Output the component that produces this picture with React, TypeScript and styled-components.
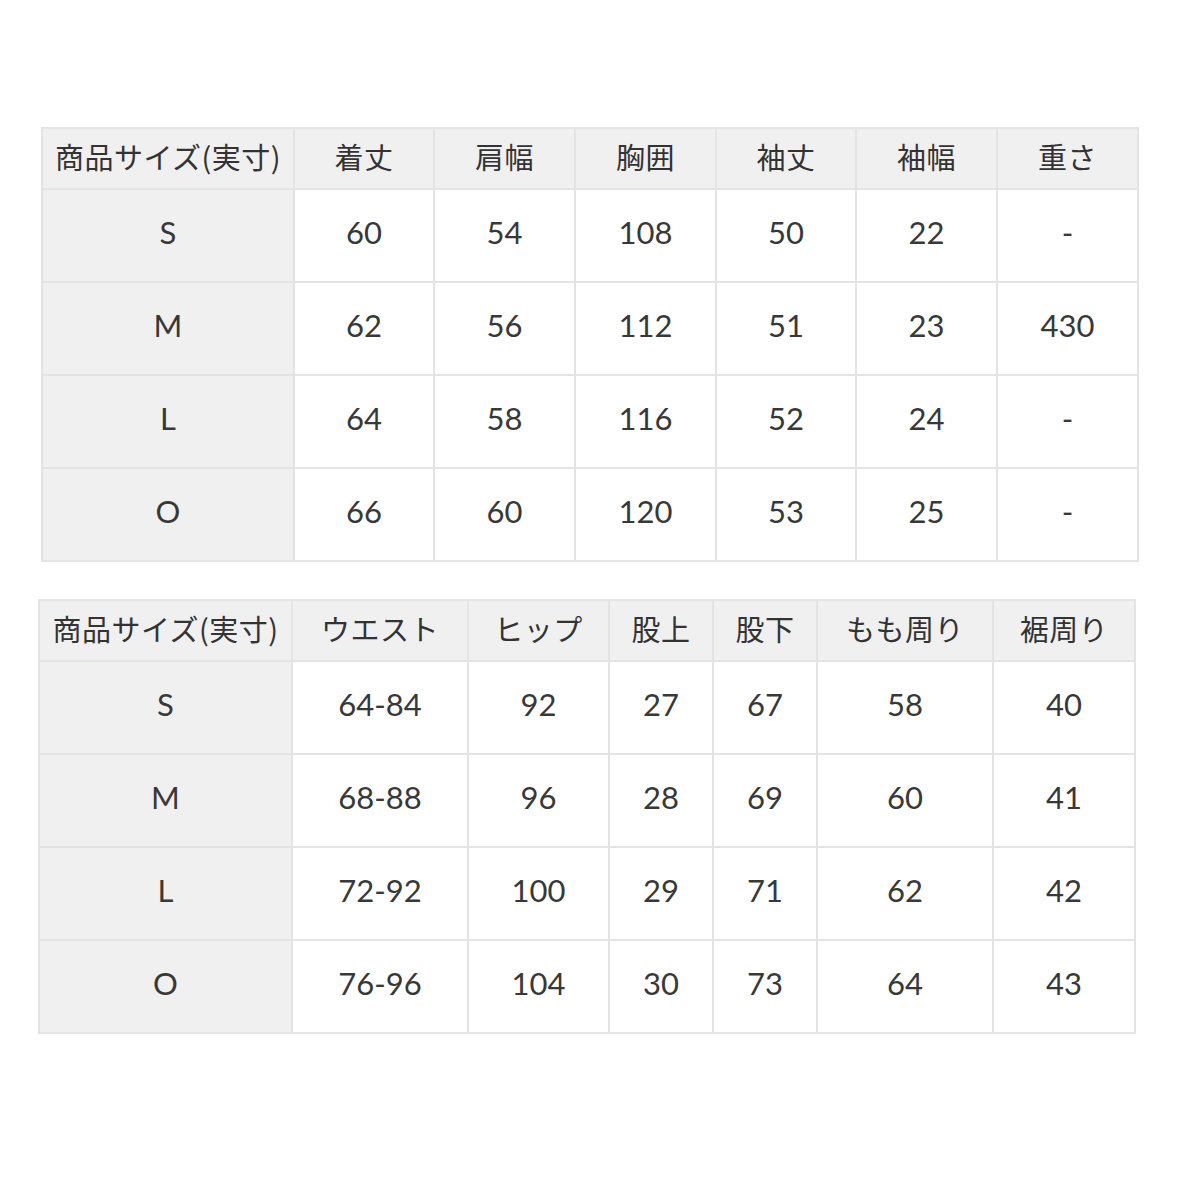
import React from 'react';
import styled, { createGlobalStyle } from 'styled-components';

const GlobalStyle = createGlobalStyle`
  body {
    margin: 0;
    background: #ffffff;
    font-family: Lato, "Noto Sans CJK JP", sans-serif;
    color: #333333;
  }
`;

const Page = styled.div`
  width: 1200px;
  height: 1200px;
  padding-top: 127px;
  box-sizing: border-box;
  display: flex;
  flex-direction: column;
  gap: 37px;
`;

const Table = styled.table<{ left: number }>`
  margin-left: ${p => p.left}px;
  width: 1096px;
  border-collapse: collapse;
  table-layout: fixed;
  border: 2px solid #e4e4e4;
`;

const HeadCell = styled.th`
  height: 61px;
  padding: 0 0 5px;
  box-sizing: border-box;
  background: #f0f0f0;
  border: 2px solid #e4e4e4;
  font-family: "Noto Sans CJK JP", sans-serif;
  font-weight: 400;
  font-size: 29px;
  letter-spacing: 0.5px;
  color: #333333;
  text-align: center;
  vertical-align: middle;
  white-space: nowrap;
`;

const SizeCell = styled.td`
  height: 93px;
  padding: 0 0 7px;
  box-sizing: border-box;
  background: #f0f0f0;
  border: 2px solid #e4e4e4;
  font-size: 31px;
  color: #383838;
  text-align: center;
  vertical-align: middle;
`;

const ValueCell = styled.td`
  height: 93px;
  padding: 0 0 7px;
  box-sizing: border-box;
  background: #ffffff;
  border: 2px solid #e4e4e4;
  font-size: 31px;
  color: #383838;
  text-align: center;
  vertical-align: middle;
`;

type Chart = {
  left: number;
  widths: number[];
  heads: string[];
  rows: string[][];
};

const charts: Chart[] = [
  {
    left: 41,
    widths: [252, 140, 141, 141, 140, 141, 141],
    heads: ['商品サイズ(実寸)', '着丈', '肩幅', '胸囲', '袖丈', '袖幅', '重さ'],
    rows: [
      ['S', '60', '54', '108', '50', '22', '-'],
      ['M', '62', '56', '112', '51', '23', '430'],
      ['L', '64', '58', '116', '52', '24', '-'],
      ['O', '66', '60', '120', '53', '25', '-'],
    ],
  },
  {
    left: 38,
    widths: [253, 176, 141, 104, 104, 176, 142],
    heads: ['商品サイズ(実寸)', 'ウエスト', 'ヒップ', '股上', '股下', 'もも周り', '裾周り'],
    rows: [
      ['S', '64-84', '92', '27', '67', '58', '40'],
      ['M', '68-88', '96', '28', '69', '60', '41'],
      ['L', '72-92', '100', '29', '71', '62', '42'],
      ['O', '76-96', '104', '30', '73', '64', '43'],
    ],
  },
];

const SizeTable: React.FC<{ chart: Chart }> = ({ chart }) => (
  <Table left={chart.left}>
    <colgroup>
      {chart.widths.map((w, i) => (
        <col key={i} style={{ width: w }} />
      ))}
    </colgroup>
    <thead>
      <tr>
        {chart.heads.map(h => (
          <HeadCell key={h}>{h}</HeadCell>
        ))}
      </tr>
    </thead>
    <tbody>
      {chart.rows.map(row => (
        <tr key={row[0]}>
          <SizeCell>{row[0]}</SizeCell>
          {row.slice(1).map((v, i) => (
            <ValueCell key={i}>{v}</ValueCell>
          ))}
        </tr>
      ))}
    </tbody>
  </Table>
);

const App: React.FC = () => (
  <>
    <GlobalStyle />
    <Page>
      {charts.map((c, i) => (
        <SizeTable key={i} chart={c} />
      ))}
    </Page>
  </>
);

export default App;
